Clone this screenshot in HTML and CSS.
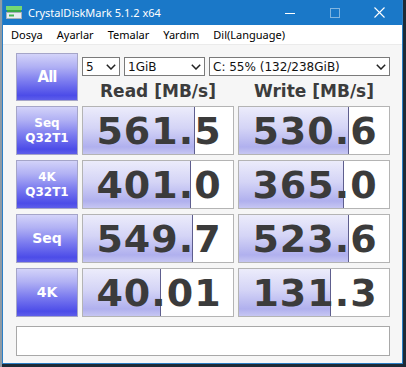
FILE: index.html
```html
<!DOCTYPE html>
<html>
  <head>
    <title>CrystalDiskMark 5.1.2 x64</title>
    <link rel="stylesheet" href="styles.css">
  </head>
  <body>
    <div class="window">
      <div class="titlebar">
        <svg class="app-icon" width="16" height="13" viewBox="0 0 16 13">
          <rect x="0" y="0" width="16" height="4" fill="#74d872"/>
          <rect x="1" y="4" width="14" height="2" fill="#3aa948"/>
          <rect x="0.5" y="6.5" width="15" height="6" fill="#e9edf0" stroke="#a6b0b8"/>
          <rect x="3" y="8.5" width="5" height="2" fill="#46b552"/>
        </svg>
        <span class="title">CrystalDiskMark 5.1.2 x64</span>
        <div class="controls">
          <span class="ctl">
            <svg width="10" height="10" viewBox="0 0 10 10"><line x1="0" y1="5.5" x2="10" y2="5.5" stroke="#fff" stroke-width="1"/></svg>
          </span>
          <span class="ctl faded">
            <svg width="10" height="10" viewBox="0 0 10 10"><rect x="0.5" y="0.5" width="9" height="9" fill="none" stroke="#fff" stroke-width="1"/></svg>
          </span>
          <span class="ctl">
            <svg width="11" height="11" viewBox="0 0 11 11"><path d="M0.5 0.5 L10.5 10.5 M10.5 0.5 L0.5 10.5" stroke="#fff" stroke-width="1.1"/></svg>
          </span>
        </div>
      </div>

      <div class="menubar">
        <span>Dosya</span>
        <span>Ayarlar</span>
        <span>Temalar</span>
        <span>Yardım</span>
        <span>Dil(Language)</span>
      </div>

      <div class="main">
        <div class="grid">
          <div class="label all">All</div>
          <div class="top">
            <div class="selects">
              <div class="select count">
                <span>5</span>
                <svg width="10" height="6" viewBox="0 0 10 6"><polyline points="0.8,0.8 5,5 9.2,0.8" fill="none" stroke="#222" stroke-width="1.5"/></svg>
              </div>
              <div class="select size">
                <span>1GiB</span>
                <svg width="10" height="6" viewBox="0 0 10 6"><polyline points="0.8,0.8 5,5 9.2,0.8" fill="none" stroke="#222" stroke-width="1.5"/></svg>
              </div>
              <div class="select drive">
                <span>C: 55% (132/238GiB)</span>
                <svg width="10" height="6" viewBox="0 0 10 6"><polyline points="0.8,0.8 5,5 9.2,0.8" fill="none" stroke="#222" stroke-width="1.5"/></svg>
              </div>
            </div>
            <div class="heads">
              <div>Read [MB/s]</div>
              <div>Write [MB/s]</div>
            </div>
          </div>

          <div class="label">Seq<br>Q32T1</div>
          <div class="cell" style="--w: 112px">561.5</div>
          <div class="cell" style="--w: 110px">530.6</div>

          <div class="label">4K<br>Q32T1</div>
          <div class="cell" style="--w: 108px">401.0</div>
          <div class="cell" style="--w: 105px">365.0</div>

          <div class="label big">Seq</div>
          <div class="cell" style="--w: 110px">549.7</div>
          <div class="cell" style="--w: 110px">523.6</div>

          <div class="label big">4K</div>
          <div class="cell" style="--w: 78px">40.01</div>
          <div class="cell" style="--w: 92px">131.3</div>
        </div>

        <div class="status"></div>
      </div>
    </div>
  </body>
</html>
```

FILE: styles.css
```css
body {
  margin: 0;
  background: linear-gradient(to right, #8f9ba5 0 2px, #1d2a36 2px);
  font-family: "DejaVu Sans", sans-serif;
  height: 367px;
  overflow: hidden;
}

.window {
  margin-left: 2px;
  width: 401px;
  height: 364px;
  box-sizing: border-box;
  border: 1px solid #2b7fc6;
  border-top: 0;
  background: #f6f6f6;
}

/* title bar */
.titlebar {
  display: flex;
  align-items: center;
  height: 25px;
  padding-left: 3px;
  background: #1a78c8;
  color: #fff;
}

.app-icon {
  margin-right: 6px;
}

.title {
  font-family: "Noto Sans", sans-serif;
  font-size: 11px;
}

.controls {
  margin-left: auto;
  display: flex;
}

.ctl {
  width: 45px;
  height: 25px;
  display: flex;
  align-items: center;
  justify-content: center;
}

.ctl.faded {
  opacity: 0.45;
}

/* menu */
.menubar {
  display: flex;
  align-items: center;
  gap: 14px;
  height: 19px;
  padding-left: 8px;
  background: #fff;
  border-bottom: 1px solid #ebebeb;
  font-family: "Noto Sans", sans-serif;
  font-size: 11px;
  color: #000;
}

/* main area */
.main {
  padding: 8px 0 0 13px;
}

.grid {
  display: grid;
  grid-template-columns: 62px 152px 152px;
  grid-template-rows: 48px repeat(4, 49px);
  gap: 5px 4px;
}

.label {
  box-sizing: border-box;
  border: 1px solid #a5a5c8;
  background: linear-gradient(#d3d3f9 0%, #b0b0f4 28%, #7a7aef 60%, #4c4ce8 90%, #5e5eea 100%);
  color: #fff;
  font-weight: bold;
  font-size: 12px;
  line-height: 15px;
  display: flex;
  align-items: center;
  justify-content: center;
  text-align: center;
}

.label.all {
  font-size: 15px;
  letter-spacing: -1px;
}

.label.big {
  font-size: 14px;
}

.top {
  grid-column: 2 / 4;
}

.selects {
  display: flex;
  gap: 4px;
  margin-top: 4px;
}

.select {
  box-sizing: border-box;
  height: 19px;
  display: flex;
  align-items: center;
  justify-content: space-between;
  padding: 0 3px 0 3px;
  background: #fff;
  border: 1px solid #7a7a7a;
  font-size: 12px;
  color: #111;
}

.select.count {
  width: 38px;
}

.select.size {
  width: 81px;
}

.select.drive {
  width: 181px;
}

.heads {
  display: grid;
  grid-template-columns: 152px 152px;
  gap: 4px;
  height: 30px;
  line-height: 30px;
  text-align: center;
  font-size: 17px;
  font-weight: bold;
  color: #3c3c3c;
}

.cell {
  box-sizing: border-box;
  border: 1px solid #b4b4b4;
  background:
    linear-gradient(#5e5e8e, #5e5e8e) no-repeat calc(var(--w) - 1px) 0 / 1px 100%,
    linear-gradient(#ececfb 0%, #d4d4f6 45%, #b0b0ee 85%, #c6c6f2 100%) no-repeat 0 0 / var(--w) 100%,
    #fff;
  text-align: center;
  font-size: 38px;
  font-weight: bold;
  line-height: 48px;
  letter-spacing: 1px;
  padding-left: 2px;
  color: #3b3b3b;
}

.status {
  box-sizing: border-box;
  width: 374px;
  height: 30px;
  margin-top: 9px;
  background: #fff;
  border: 1px solid #a8a8a8;
}
```
